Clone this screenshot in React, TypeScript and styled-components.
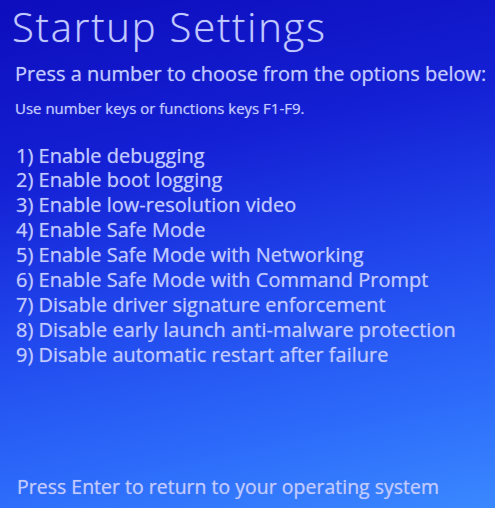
import styled, { createGlobalStyle } from 'styled-components';

const GlobalStyle = createGlobalStyle`
	html, body {
		margin: 0;
		padding: 0;
	}
	body {
		font-family: 'Open Sans', 'Noto Sans', sans-serif;
	}
`;

const options = [
	'Enable debugging',
	'Enable boot logging',
	'Enable low-resolution video',
	'Enable Safe Mode',
	'Enable Safe Mode with Networking',
	'Enable Safe Mode with Command Prompt',
	'Disable driver signature enforcement',
	'Disable early launch anti-malware protection',
	'Disable automatic restart after failure',
];

const App: React.FC = () => {
	return (
		<>
			<GlobalStyle />
			<Screen>
				<Title>Startup Settings</Title>
				<Prompt>Press a number to choose from the options below:</Prompt>
				<Hint>Use number keys or functions keys F1-F9.</Hint>
				<OptionList>
					{options.map((opt, i) => (
						<OptionItem key={opt}>
							{i + 1}) {opt}
						</OptionItem>
					))}
				</OptionList>
				<Footer>Press Enter to return to your operating system</Footer>
			</Screen>
		</>
	);
};

const Screen = styled.div`
	width: 495px;
	height: 508px;
	box-sizing: border-box;
	display: flex;
	flex-direction: column;
	padding: 0 0 8px 12px;
	overflow: hidden;
	background: linear-gradient(168deg, #0d0dbc 0%, #1420d4 30%, #2046ec 55%, #2c6afa 80%, #3a88ff 100%);
	color: #c2caff;
	text-shadow: 0 0 1px rgba(200, 210, 255, 0.6);
`;

const Title = styled.h1`
	margin: 0;
	font-size: 40px;
	font-weight: 300;
	line-height: 54px;
	letter-spacing: 1.8px;
`;

const Prompt = styled.div`
	margin-top: 7px;
	padding-left: 3px;
	font-size: 20px;
	line-height: 26px;
`;

const Hint = styled.div`
	margin-top: 11px;
	padding-left: 3px;
	font-size: 15px;
	line-height: 20px;
`;

const OptionList = styled.div`
	display: flex;
	flex-direction: column;
	margin-top: 25.5px;
	padding-left: 4px;
`;

const OptionItem = styled.div`
	font-size: 20px;
	line-height: 24.9px;
	white-space: nowrap;
`;

const Footer = styled.div`
	margin-top: auto;
	padding-left: 5px;
	font-size: 19.5px;
	line-height: 26px;
	white-space: nowrap;
`;

export default App;
